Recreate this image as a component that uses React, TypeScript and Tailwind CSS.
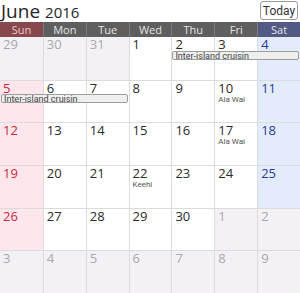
import React from "react";

type Cell = {
  day: number;
  outside?: boolean;
  events?: string[];
};

const DAYS = ["Sun", "Mon", "Tue", "Wed", "Thu", "Fri", "Sat"];

const WEEKS: Cell[][] = [
  [{ day: 29, outside: true }, { day: 30, outside: true }, { day: 31, outside: true }, { day: 1 }, { day: 2 }, { day: 3 }, { day: 4 }],
  [{ day: 5 }, { day: 6 }, { day: 7 }, { day: 8 }, { day: 9 }, { day: 10, events: ["Ala Wai"] }, { day: 11 }],
  [{ day: 12 }, { day: 13 }, { day: 14 }, { day: 15 }, { day: 16 }, { day: 17, events: ["Ala Wai"] }, { day: 18 }],
  [{ day: 19 }, { day: 20 }, { day: 21 }, { day: 22, events: ["Keehi"] }, { day: 23 }, { day: 24 }, { day: 25 }],
  [{ day: 26 }, { day: 27 }, { day: 28 }, { day: 29 }, { day: 30 }, { day: 1, outside: true }, { day: 2, outside: true }],
  [{ day: 3, outside: true }, { day: 4, outside: true }, { day: 5, outside: true }, { day: 6, outside: true }, { day: 7, outside: true }, { day: 8, outside: true }, { day: 9, outside: true }],
];

// multi-day bars: week index, start col, span
const BARS = [
  { week: 0, start: 4, span: 3, title: "Inter-island cruisin" },
  { week: 1, start: 0, span: 3, title: "Inter-island cruisin" },
];

const HEAD_BG = ["bg-[#87484d]", "bg-[#5f5f5f]", "bg-[#5f5f5f]", "bg-[#5f5f5f]", "bg-[#5f5f5f]", "bg-[#5f5f5f]", "bg-[#515a82]"];

function cellBg(col: number, outside?: boolean) {
  if (outside) return "bg-[#f3f1f5]";
  if (col === 0) return "bg-[#fde7ec]";
  if (col === 6) return "bg-[#e3ecfb]";
  return "bg-white";
}

function numColor(col: number, outside?: boolean) {
  if (outside) return "text-[#a9a9a9]";
  if (col === 0) return "text-[#c4283c]";
  if (col === 6) return "text-[#2b3a97]";
  return "text-[#2a2a2a]";
}

const COL_START = ["col-start-1", "col-start-2", "col-start-3", "col-start-4", "col-start-5", "col-start-6", "col-start-7"];
const COL_SPAN = ["col-span-1", "col-span-2", "col-span-3", "col-span-4"];

export default function App() {
  return (
    <div className="w-[300px] h-[293px] bg-white flex flex-col overflow-hidden font-['Open_Sans','Noto_Sans',sans-serif]">
      <div className="h-[22px] flex items-start justify-between">
        <div className="flex items-baseline gap-[5px] pl-[1px] text-[#262626] leading-[22px]">
          <span className="text-[19px]">June</span>
          <span className="text-[15px]">2016</span>
        </div>
        <button className="mt-[1px] mr-[2px] h-[19px] w-[38px] border border-[#9a9a9a] rounded-[3px] bg-white text-[12px] leading-none text-[#333] font-['Roboto',sans-serif]">
          Today
        </button>
      </div>

      <div className="grid grid-cols-7 h-[15px]">
        {DAYS.map((d, i) => (
          <div
            key={d}
            className={`${HEAD_BG[i]} ${i === 0 ? "text-[#f0c9cc]" : "text-[#e4e4e4]"} ${i > 0 ? "border-l border-[#7a7a7a]" : ""} text-[11px] leading-[15px] text-center`}
          >
            {d}
          </div>
        ))}
      </div>

      <div className="flex-1 grid grid-rows-6">
        {WEEKS.map((week, wi) => (
          <div key={wi} className="relative grid grid-cols-7">
            {week.map((c, ci) => (
              <div
                key={ci}
                className={`${cellBg(ci, c.outside)} ${ci > 0 ? "border-l border-[#dcdcdc]" : ""} ${wi > 0 ? "border-t border-[#dcdcdc]" : ""} px-[3px] pt-[1px]`}
              >
                <div className={`${numColor(ci, c.outside)} text-[13px] leading-[13px]`}>{c.day}</div>
                {c.events?.map((e) => (
                  <div key={e} className="text-[8px] leading-[9px] text-[#555] font-['Roboto',sans-serif]">
                    {e}
                  </div>
                ))}
              </div>
            ))}
            <div className="absolute inset-x-0 top-[14px] grid grid-cols-7 pointer-events-none">
              {BARS.filter((b) => b.week === wi).map((b) => (
                <div
                  key={b.week}
                  className={`${COL_START[b.start]} ${COL_SPAN[b.span - 1]} mx-[1px] h-[9px] border border-[#9d9d9d] rounded-[2px] bg-[#efefef] text-[9px] leading-[8px] text-[#444] px-[2px] overflow-hidden whitespace-nowrap font-['Roboto',sans-serif]`}
                >
                  {b.title}
                </div>
              ))}
            </div>
          </div>
        ))}
      </div>
    </div>
  );
}
